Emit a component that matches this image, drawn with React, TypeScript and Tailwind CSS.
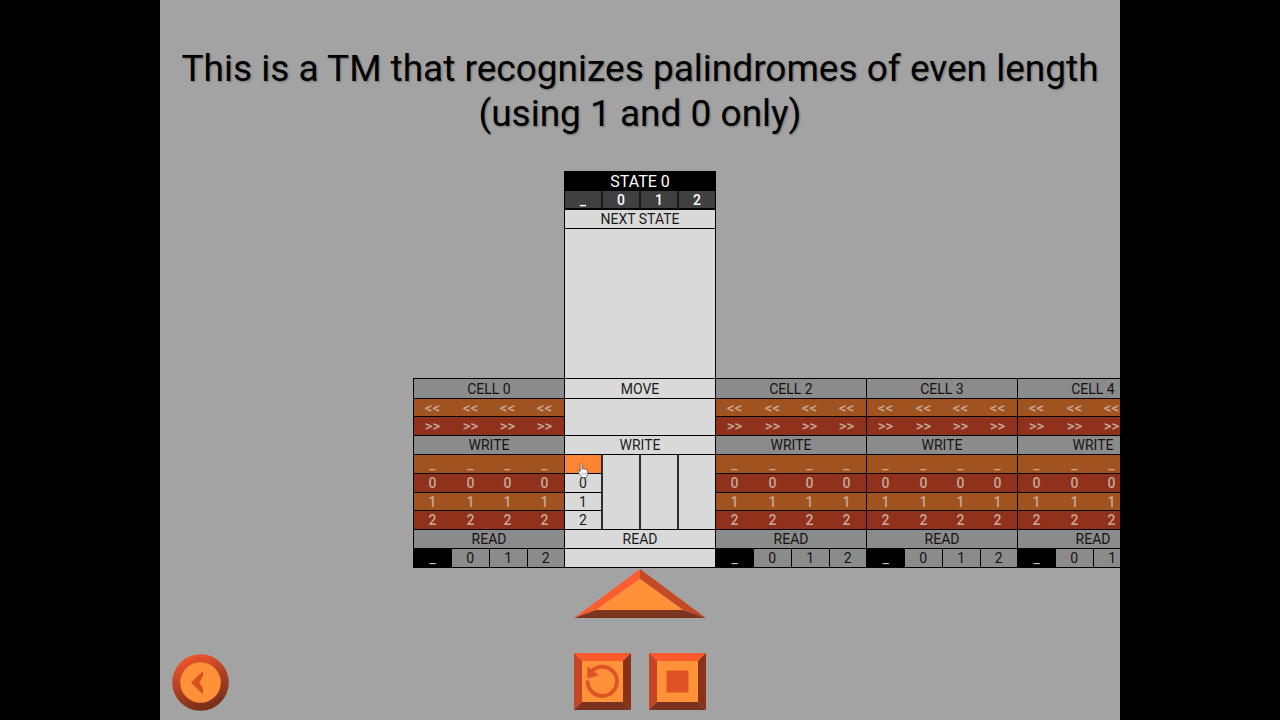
import { useState } from "react";
import type { ReactNode } from "react";

const SYMBOLS = ["_", "0", "1", "2"];

type Row = { symbol: string; label: string; tone: string };

const MOVES: Row[] = [
  { symbol: "<<", label: "Move left", tone: "h-[18px] bg-[#a0531f] text-[15px]" },
  { symbol: ">>", label: "Move right", tone: "h-[19px] bg-[#8f311b] text-[15px]" },
];

const WRITES: Row[] = [
  { symbol: "_", label: "Write blank", tone: "h-[19px] bg-[#a0531f] text-[14px]" },
  { symbol: "0", label: "Write 0", tone: "h-[19px] bg-[#8f311b] text-[14px]" },
  { symbol: "1", label: "Write 1", tone: "h-[18px] bg-[#a0531f] text-[14px]" },
  { symbol: "2", label: "Write 2", tone: "h-[19px] bg-[#8f311b] text-[14px]" },
];

function Heading({ children, tall = false, light = false }: { children: string; tall?: boolean; light?: boolean }) {
  return (
    <h2
      className={`flex items-center justify-center border-b border-black text-sm leading-4 ${tall ? "h-5" : "h-[19px]"} ${
        light ? "bg-[#d9d9d9] text-[#1c1c1c]" : "bg-[#8b8b8b] text-[#141414]"
      }`}
    >
      {children}
    </h2>
  );
}

function OptionRow({ row }: { row: Row }) {
  return (
    <div
      className={`grid grid-cols-[37px_39px_35px_39px] items-center border-b border-black leading-4 font-medium text-[#c6a797] ${row.tone}`}
    >
      {SYMBOLS.map((read) => (
        <button key={read} type="button" aria-label={`${row.label} on ${read}`} className="h-4 cursor-pointer">
          {row.symbol}
        </button>
      ))}
    </div>
  );
}

function TapeCell({ index, joined = false }: { index: number; joined?: boolean }) {
  return (
    <section className={`shrink-0 border-t border-black ${joined ? "w-[150px]" : "w-[151px] border-l"}`}>
      <Heading tall>{`CELL ${index}`}</Heading>
      {MOVES.map((row) => (
        <OptionRow key={row.symbol} row={row} />
      ))}
      <Heading>WRITE</Heading>
      {WRITES.map((row) => (
        <OptionRow key={row.symbol} row={row} />
      ))}
      <Heading>READ</Heading>
      <div className="grid h-[19px] grid-cols-4 border-b border-black bg-[#8b8b8b] text-sm leading-4">
        {SYMBOLS.map((symbol, i) => (
          <button
            key={symbol}
            type="button"
            className={`h-[18px] cursor-pointer ${i === 0 ? "bg-black text-[#c4c4c4]" : "text-[#141414]"} ${
              i > 1 ? "border-l border-black" : ""
            }`}
          >
            {symbol}
          </button>
        ))}
      </div>
    </section>
  );
}

function Pointer() {
  return (
    <svg className="pointer-events-none absolute top-2 left-3 h-4 w-3" viewBox="0 0 12 16" aria-hidden="true">
      <path
        d="M3.2 1.4c0-1.1 1.8-1.1 1.8 0v5l.4-.6c.4-.5 1.5-.3 1.6.4.4-.6 1.6-.4 1.8.4.5-.5 1.7-.1 1.8.8v3.4c0 1.2-.8 1.8-.9 2.7v1H4.3v-1C3.5 12 1.9 10.6.9 8.9.4 8 1.3 7.2 2.1 7.8l1.1 1z"
        fill="#fff"
        stroke="#333"
        strokeWidth="0.6"
        strokeLinejoin="round"
      />
      <path d="M5.3 9.5v2.5M7 9.5v2.5M8.7 9.5v2.5" stroke="#777" strokeWidth="0.5" />
    </svg>
  );
}

function StateColumn() {
  const [written, setWritten] = useState("_");
  return (
    <section className="w-[152px] shrink-0 border-x border-t border-black text-[#1c1c1c]">
      <h1 className="flex h-[19px] items-center justify-center bg-black text-base leading-4 text-white">STATE 0</h1>
      <div className="grid h-[19px] grid-cols-[36px_38px_38px_38px] border-b-2 border-black bg-[#404040] text-sm font-medium text-white">
        {SYMBOLS.map((symbol, i) => (
          <span key={symbol} className={`text-center leading-[18px] ${i > 0 ? "border-l-2 border-[#1a1a1a]" : ""}`}>
            {symbol}
          </span>
        ))}
      </div>
      <Heading light>NEXT STATE</Heading>
      <div className="h-[150px] border-b border-black bg-[#d9d9d9]" />
      <Heading tall light>MOVE</Heading>
      <div className="h-[37px] border-b border-black bg-[#d9d9d9]" />
      <Heading light>WRITE</Heading>
      <div className="grid h-[75px] grid-cols-[36px_38px_38px_38px] border-b border-black bg-[#d9d9d9]">
        <div className="relative">
          {WRITES.map((row, i) => (
            <button
              key={row.symbol}
              type="button"
              aria-label={row.label}
              onClick={() => setWritten(row.symbol)}
              className={`block w-full cursor-pointer text-sm leading-4 ${i > 1 ? "h-[18px]" : "h-[19px]"} ${
                i < 3 ? "border-b border-black" : ""
              } ${row.symbol === written ? "bg-[#fd8433]" : ""}`}
            >
              {row.symbol}
            </button>
          ))}
          <Pointer />
        </div>
        <div className="border-l-2 border-[#2e2e2e]" />
        <div className="border-l-2 border-[#2e2e2e]" />
        <div className="border-l-2 border-[#2e2e2e]" />
      </div>
      <Heading light>READ</Heading>
      <div className="h-[19px] border-b border-black bg-[#d9d9d9]" />
    </section>
  );
}

function Bevel({ label, children }: { label: string; children?: ReactNode }) {
  return (
    <button type="button" aria-label={label} className="size-[57px] cursor-pointer">
      <svg viewBox="0 0 57 57" className="size-full">
        <path d="M0 0h57l-8 8H8z" fill="#fb5a2c" />
        <path d="M0 0l8 8v41l-8 8z" fill="#c44624" />
        <path d="M57 0v57l-8-8V8z" fill="#893216" />
        <path d="M0 57l8-8h41l8 8z" fill="#7b3220" />
        <path d="M8 8h41v41H8z" fill="#ff9138" />
        {children}
      </svg>
    </button>
  );
}

export default function App() {
  return (
    <div className="min-h-screen bg-black font-[Roboto,sans-serif]">
      <main className="mx-auto flex min-h-screen w-3/4 flex-col overflow-hidden bg-[#a3a3a3]">
        <p className="h-[171px] shrink-0 pt-[46px] text-center text-[37px] leading-[45px] text-black [text-shadow:1px_1px_2px_#00000055]">
          This is a TM that recognizes palindromes of even length
          <br />
          (using 1 and 0 only)
        </p>
        <div className="flex items-end overflow-hidden pl-[calc(50%-227px)]">
          <TapeCell index={0} />
          <StateColumn />
          <TapeCell index={2} joined />
          <TapeCell index={3} />
          <TapeCell index={4} />
        </div>
        <button type="button" aria-label="Select state" className="mt-px h-[50px] w-[132px] cursor-pointer self-center">
          <svg viewBox="0 0 132 50" className="size-full">
            <path d="M66 0v10L22 41 0 49z" fill="#fc5e2f" />
            <path d="M66 0v10l43 31 23 8z" fill="#c44a26" />
            <path d="M0 49l22-8h87l23 8z" fill="#7d3520" />
            <path d="M66 10l43 31H22z" fill="#ff9138" />
          </svg>
        </button>
        <footer className="mt-auto grid grid-cols-3 items-end px-3 pb-[10px]">
          <button type="button" aria-label="Back" className="-mb-px size-[57px] cursor-pointer">
            <svg viewBox="0 0 57 57" className="size-full">
              <defs>
                <linearGradient id="rim" x1="0.3" y1="0" x2="0.7" y2="1">
                  <stop offset="0" stopColor="#f2572b" />
                  <stop offset="0.5" stopColor="#ad3f22" />
                  <stop offset="1" stopColor="#6f2c18" />
                </linearGradient>
              </defs>
              <circle cx="28.5" cy="28.5" r="28.3" fill="url(#rim)" />
              <circle cx="28.5" cy="28.5" r="20.3" fill="#ff9138" />
              <path d="M31 17v5.3l-3.7 6.3 3.7 5.700v6.300L19 28.600z" fill="#d9501f" />
            </svg>
          </button>
          <div className="flex justify-center gap-[18px]">
            <Bevel label="Restart">
              <path d="M13.7 27.7A14.6 14.6 0 1 0 17.5 18.5" fill="none" stroke="#df5226" strokeWidth="3.8" />
              <path d="M13.3 13.5v12l11.7-3.3z" fill="#df5226" />
            </Bevel>
            <Bevel label="Stop">
              <path d="M17.5 17.5h22v22h-22z" fill="#df5226" />
            </Bevel>
          </div>
        </footer>
      </main>
    </div>
  );
}
